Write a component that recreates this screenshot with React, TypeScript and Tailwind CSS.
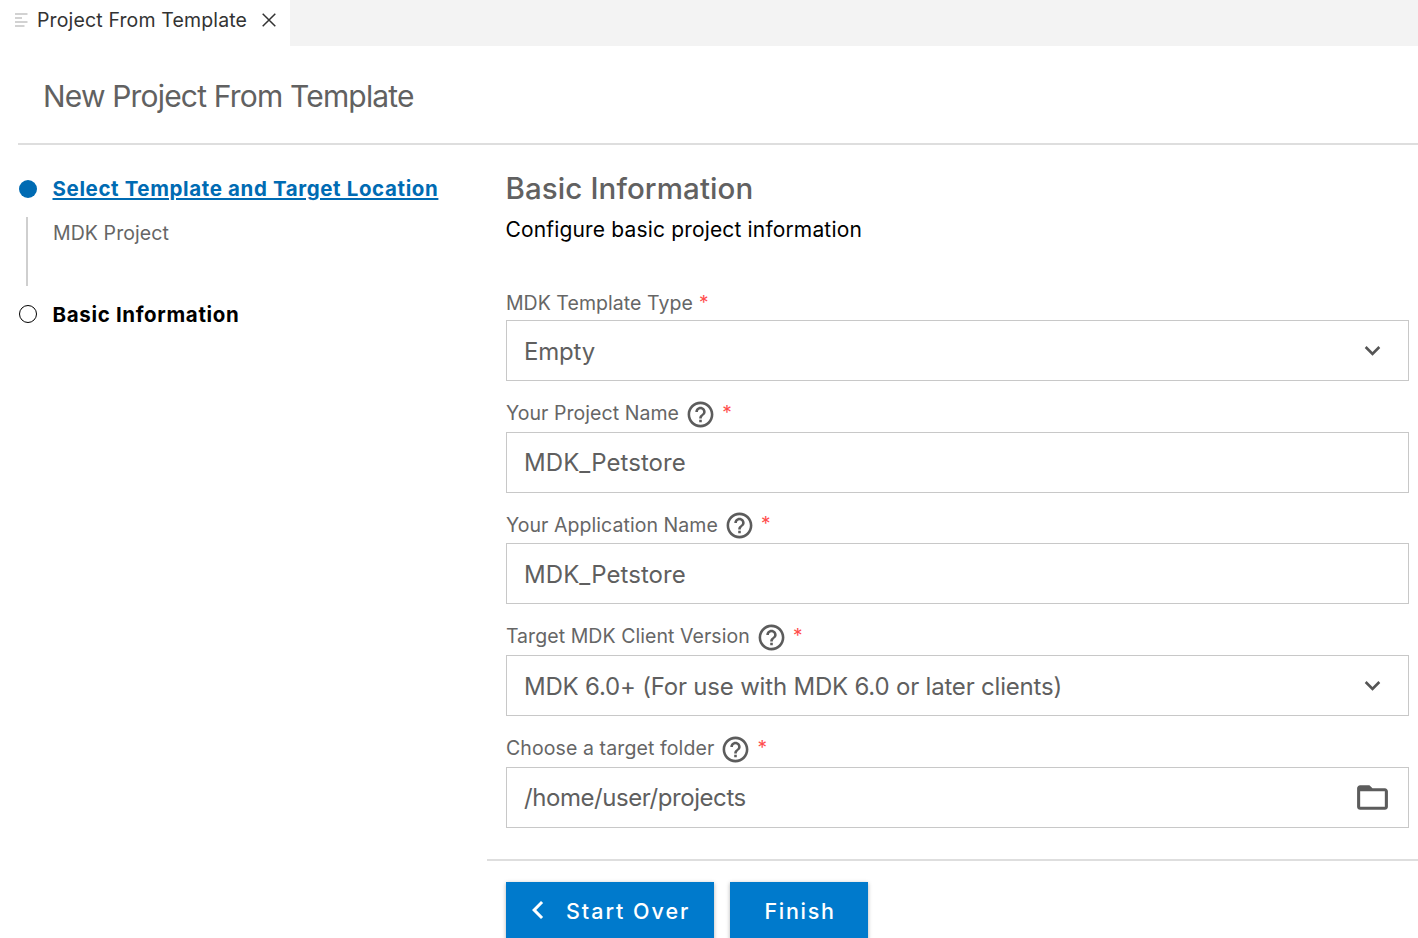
import type { ReactNode } from "react";
import { MdChevronLeft, MdExpandMore, MdFolderOpen, MdHelpOutline } from "react-icons/md";

type FieldProps = {
  label: string;
  labelClass: string;
  value: string;
  valueClass: string;
  help?: boolean;
  icon?: ReactNode;
};

function Field({ label, labelClass, value, valueClass, help = false, icon }: FieldProps) {
  return (
    <div className="flex h-[111.7px] shrink-0 flex-col">
      <div className="flex h-9 items-center pl-[0.4px] text-[19.5px] leading-6 text-[#666]">
        <span className={`whitespace-nowrap ${help ? "mb-[1.5px]" : "mt-[2px]"} ${labelClass}`}>{label}</span>
        {help && <MdHelpOutline className="ml-[6px] mt-[1px] size-[31px] shrink-0 text-[#5c5c5c]" />}
        <span className={`ml-[6.2px] text-[19px] text-[#ff4d4d] ${help ? "mb-[2px]" : "mt-[1px]"}`}>*</span>
      </div>
      <div className="flex h-[61px] items-center justify-between border border-[#c8c8c8] pl-[17.5px]">
        <span className={`mt-[2px] whitespace-nowrap text-2xl text-[#5f5f5f] ${valueClass}`}>{value}</span>
        {icon}
      </div>
    </div>
  );
}

const chevron = <MdExpandMore className="mr-5 size-[31px] text-[#555]" />;

export default function App() {
  return (
    <div className="flex h-[938px] w-[1418px] flex-col overflow-hidden bg-white font-['Inter',sans-serif]">
      <div className="flex h-[46px] shrink-0 bg-[#f3f3f3]">
        <div className="flex w-[290px] items-center bg-white pb-[6px] pl-[15px]">
          <svg className="mb-[1px] h-[14px] w-[13px]" viewBox="0 0 13 14" stroke="#c4c4c4" strokeWidth="1.3">
            <path d="M0 1h12.5M0 5h7M0 9h12.5M0 13h9.5" />
          </svg>
          <span className="ml-[9px] mt-[2px] whitespace-nowrap text-[19.5px] tracking-[0.14px] text-[#333]">Project From Template</span>
          <svg className="mb-[1px] ml-[14.5px] size-[14px]" viewBox="0 0 14 14" stroke="#333" strokeWidth="1.5">
            <path d="M0.7 0.7 13.3 13.3M13.3 0.7 0.7 13.3" />
          </svg>
        </div>
      </div>

      <header className="ml-[18px] flex h-[99px] shrink-0 items-center border-b-2 border-[#dedede] pl-[25px]">
        <h1 className="mt-[4px] text-[30px] tracking-[-0.82px] text-[#616161]">New Project From Template</h1>
      </header>

      <div className="flex min-h-0 flex-1">
        <nav className="flex w-[487px] shrink-0 flex-col pl-[18.5px] pt-[29px]">
          <div className="flex h-[30px] items-center">
            <span className="size-[18.5px] rounded-full bg-[#006bb3]" />
            <a className="ml-[15.5px] whitespace-nowrap text-[20.5px] font-bold tracking-[0.62px] text-[#006bb3] underline decoration-[1.5px] underline-offset-[2px]">
              Select Template and Target Location
            </a>
          </div>
          <div className="ml-[7.5px] mt-[13px] h-[69px] border-l-2 border-[#cfcfcf] pl-[25px]">
            <p className="pt-[1px] text-[19.5px] leading-[31px] tracking-[0.08px] text-[#666]">MDK Project</p>
          </div>
          <div className="mt-[13px] flex h-[30px] items-center">
            <span className="size-[18.5px] rounded-full border-[1.5px] border-black" />
            <span className="ml-[15.5px] mt-[3px] text-[20.5px] font-bold tracking-[0.66px] text-black">Basic Information</span>
          </div>
        </nav>

        <main className="flex flex-1 flex-col">
          <section className="flex flex-col pl-[18.5px] pr-[9px]">
            <h2 className="mt-[23px] text-[29.5px] font-medium leading-[40px] tracking-[0.1px] text-[#616161]">Basic Information</h2>
            <p className="mt-[7px] text-[21px] leading-[30px] tracking-[0.16px] text-black">Configure basic project information</p>
            <div className="mt-[39px] flex h-[575px] flex-col">
              <Field label="MDK Template Type" labelClass="tracking-[0.05px]" value="Empty" valueClass="tracking-[-0.19px]" icon={chevron} />
              <Field label="Your Project Name" labelClass="tracking-[0.06px]" value="MDK_Petstore" valueClass="tracking-[0.07px]" help />
              <Field label="Your Application Name" labelClass="tracking-[0.06px]" value="MDK_Petstore" valueClass="tracking-[0.07px]" help />
              <Field
                label="Target MDK Client Version"
                labelClass="tracking-[0.06px]"
                value="MDK 6.0+ (For use with MDK 6.0 or later clients)"
                valueClass="tracking-[-0.2px]"
                help
                icon={chevron}
              />
              <Field
                label="Choose a target folder"
                labelClass="tracking-[0.11px]"
                value="/home/user/projects"
                valueClass="tracking-[-0.44px]"
                help
                icon={<MdFolderOpen className="mr-[17px] size-[37px] text-[#5c5c5c]" />}
              />
            </div>
          </section>
          <footer className="flex shrink-0 gap-[15.5px] border-t-2 border-[#dedede] pl-[18.5px] pt-[21px] text-[21.5px] font-medium text-white">
            <button className="flex h-[58px] w-[208.5px] items-center bg-[#007acc] shadow-[0_1px_4px_rgba(0,0,0,0.3)]">
              <MdChevronLeft className="mb-[2px] ml-[14.5px] size-9" />
              <span className="ml-[10px] whitespace-nowrap tracking-[1.97px]">Start Over</span>
            </button>
            <button className="flex h-[58px] w-[138.5px] items-center bg-[#007acc] pl-[35px] tracking-[1.7px] shadow-[0_1px_4px_rgba(0,0,0,0.3)]">
              Finish
            </button>
          </footer>
        </main>
      </div>
    </div>
  );
}
